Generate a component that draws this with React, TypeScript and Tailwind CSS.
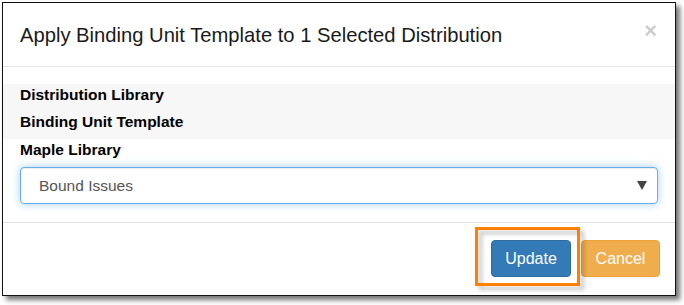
import React from "react";

function CloseButton() {
  return (
    <button className="text-[22px] leading-none font-bold text-black opacity-20 mt-[-7px]">
      ×
    </button>
  );
}

export default function App() {
  return (
    <div className="w-[684px] h-[305px] bg-white overflow-hidden font-['Liberation_Sans',Arial,sans-serif] text-[#333]">
      <div className="ml-[2px] mt-[2px] w-[674px] h-[294px] border border-[#111] bg-white shadow-[4px_4px_5px_rgba(0,0,0,0.55)] flex flex-col">
        {/* header */}
        <div className="h-[64px] shrink-0 border-b border-[#e5e5e5] flex items-center justify-between pl-[17px] pr-[18px]">
          <h4 className="text-[20.2px] leading-none text-[#1a1a1a] mt-[1px]">
            Apply Binding Unit Template to 1 Selected Distribution
          </h4>
          <CloseButton />
        </div>

        {/* body */}
        <div className="h-[155px] shrink-0 pt-[17px]">
          <div className="bg-[#f7f7f7] h-[55px] pt-[1px]">
            <div className="h-[20px] flex items-center pl-[17px] text-[15.5px] font-bold text-black">
              Distribution Library
            </div>
            <div className="h-[20px] mt-[7px] flex items-center pl-[17px] text-[15.5px] font-bold text-black">
              Binding Unit Template
            </div>
          </div>
          <div className="h-[20px] mt-[1px] flex items-center pl-[17px] text-[15.5px] font-bold text-black">
            Maple Library
          </div>
          <div className="px-[17px] mt-[7px]">
            <div className="h-[37px] w-[638px] rounded-[4px] border border-[#66afe9] bg-white shadow-[inset_0_1px_1px_rgba(0,0,0,0.075),0_0_8px_rgba(102,175,233,0.6)] flex items-center justify-between pl-[18px] pr-[10px]">
              <span className="text-[15.5px] text-[#555]">Bound Issues</span>
              <svg width="10" height="9" viewBox="0 0 10 9">
                <path d="M0 0 H10 L5 9 Z" fill="#444" />
              </svg>
            </div>
          </div>
        </div>

        {/* footer */}
        <div className="flex-1 border-t border-[#e5e5e5] flex justify-end items-start pt-[17px] pr-[15px] gap-[10px]">
          <div className="relative">
            <button className="w-[80px] h-[37px] rounded-[4px] bg-[#337ab7] border border-[#2e6da4] text-white text-[16px]">
              Update
            </button>
            <div className="absolute left-[-12px] top-[-9px] w-[105px] h-[59px] border-[3px] border-black/25 blur-[2px] pointer-events-none" />
            <div className="absolute left-[-16px] top-[-13px] w-[105px] h-[59px] border-[3px] border-[#ff8000] pointer-events-none" />
          </div>
          <button className="w-[79px] h-[37px] rounded-[4px] bg-[#f0ad4e] border border-[#eea236] text-white text-[16px]">
            Cancel
          </button>
        </div>
      </div>
    </div>
  );
}
